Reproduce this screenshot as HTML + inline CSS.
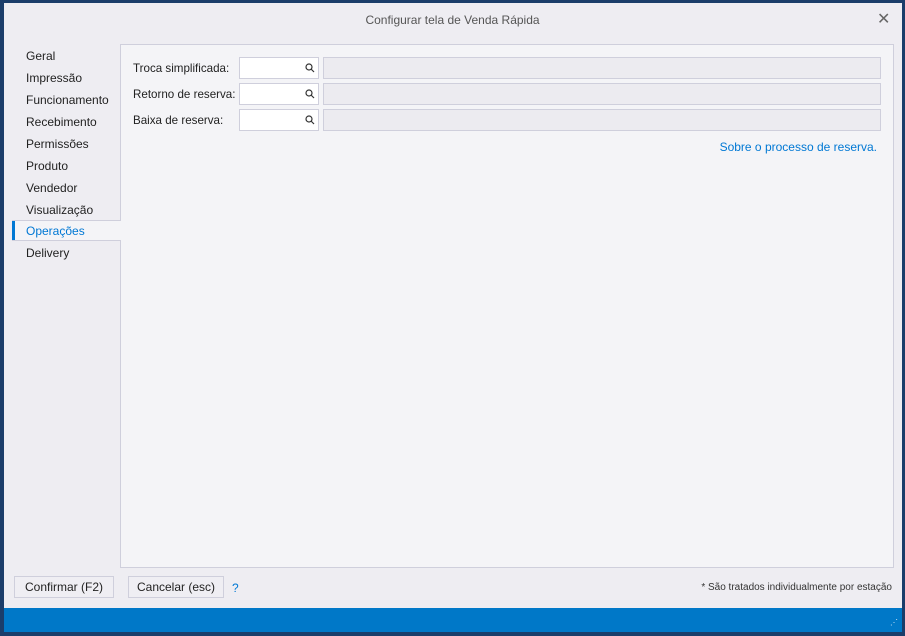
<!DOCTYPE html>
<html><head><meta charset="utf-8"><style>
*{box-sizing:border-box;margin:0;padding:0}
body{width:905px;height:636px;background:#1b3d6a;position:relative;overflow:hidden;font-family:"Liberation Sans",sans-serif;font-size:12px;color:#222}
.win{position:absolute;left:4px;top:3px;width:898px;height:605px;background:#eeedf2}
.bar{position:absolute;left:4px;top:608px;width:898px;height:24px;background:#0078c8}
.title{position:absolute;top:13px;left:0;width:905px;text-align:center;color:#555;font-size:12px}
.x{position:absolute;left:877px;top:9px;font-size:16px;color:#666}
.panel{position:absolute;left:120px;top:44px;width:774px;height:524px;background:#f4f4f7;border:1px solid #cfcfdc}
.nav div{position:absolute;left:26px;height:22px;line-height:22px;white-space:nowrap}
.lab{position:absolute;left:133px;height:22px;line-height:22px;font-size:11.6px}
.inp{position:absolute;left:239px;width:80px;height:22px;background:#fff;border:1px solid #cfcfdc}
.big{position:absolute;left:323px;width:558px;height:22px;background:#ecebf0;border:1px solid #cfcfdc}
.btn{position:absolute;top:576px;height:22px;line-height:20px;text-align:center;border:1px solid #cfcfdc;background:#efeef3}
</style></head><body>
<div class="win"></div>
<div class="bar"></div>
<div class="title">Configurar tela de Venda Rápida</div>
<div class="x">✕</div>
<div class="panel"></div>
<div class="nav">
<div style="top:45px">Geral</div>
<div style="top:67px">Impressão</div>
<div style="top:89px">Funcionamento</div>
<div style="top:111px">Recebimento</div>
<div style="top:133px">Permissões</div>
<div style="top:155px">Produto</div>
<div style="top:177px">Vendedor</div>
<div style="top:199px">Visualização</div>
</div>
<div style="position:absolute;left:12px;top:220px;width:109px;height:1px;background:#cfcfdc"></div>
<div style="position:absolute;left:12px;top:221px;width:110px;height:19px;background:#f4f4f7;border-left:3px solid #0078d4"></div>
<div style="position:absolute;left:26px;top:220px;height:22px;line-height:22px;color:#0078d4">Operações</div>
<div style="position:absolute;left:12px;top:240px;width:109px;height:1px;background:#cfcfdc"></div>
<div style="position:absolute;left:26px;top:242px;height:22px;line-height:22px">Delivery</div>
<div class="lab" style="top:58px">Troca simplificada:</div>
<div class="lab" style="top:84px">Retorno de reserva:</div>
<div class="lab" style="top:110px">Baixa de reserva:</div>
<div class="inp" style="top:57px"></div><div class="inp" style="top:83px"></div><div class="inp" style="top:109px"></div>
<svg style="position:absolute;left:305px;top:63px" width="10" height="62" viewBox="0 0 10 62" fill="none" stroke="#333" stroke-width="1.2">
<circle cx="4" cy="4" r="3"/><path d="M6 6l3 3"/>
<circle cx="4" cy="30" r="3"/><path d="M6 32l3 3"/>
<circle cx="4" cy="56" r="3"/><path d="M6 58l3 3"/></svg>
<div class="big" style="top:57px"></div><div class="big" style="top:83px"></div><div class="big" style="top:109px"></div>
<div style="position:absolute;right:28px;top:140px;color:#0078d4">Sobre o processo de reserva.</div>
<div class="btn" style="left:14px;width:100px">Confirmar (F2)</div>
<div class="btn" style="left:128px;width:96px">Cancelar (esc)</div>
<div style="position:absolute;left:232px;top:581px;color:#0078d4">?</div>
<div style="position:absolute;right:13px;top:582px;font-size:10px;color:#333">* São tratados individualmente por estação</div>
<div style="position:absolute;left:890px;top:618px;color:#cfe4f5;font-size:8px;letter-spacing:-1px">⋰</div>
</body></html>
